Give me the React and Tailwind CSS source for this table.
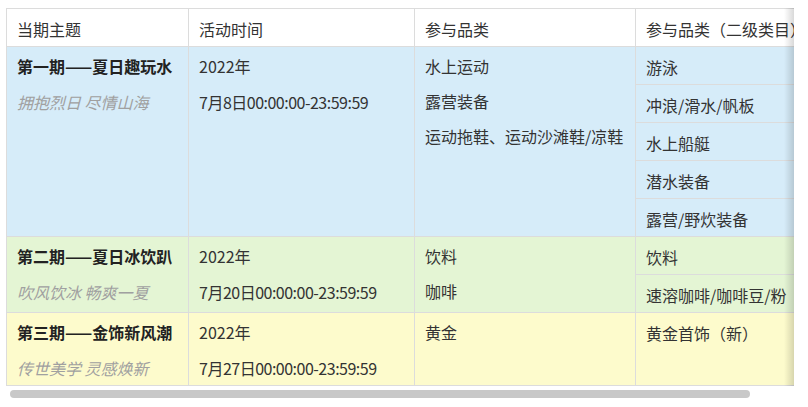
const rows = [
  {
    title: "第一期——夏日趣玩水",
    slogan: "拥抱烈日 尽情山海",
    date: "7月8日00:00:00-23:59:59",
    cats: ["水上运动", "露营装备", "运动拖鞋、运动沙滩鞋/凉鞋"],
    subs: ["游泳", "冲浪/滑水/帆板", "水上船艇", "潜水装备", "露营/野炊装备"],
    bg: "bg-[#d6ecf9]",
  },
  {
    title: "第二期——夏日冰饮趴",
    slogan: "吹风饮冰 畅爽一夏",
    date: "7月20日00:00:00-23:59:59",
    cats: ["饮料", "咖啡"],
    subs: ["饮料", "速溶咖啡/咖啡豆/粉"],
    bg: "bg-[#e4f5d4]",
  },
  {
    title: "第三期——金饰新风潮",
    slogan: "传世美学 灵感焕新",
    date: "7月27日00:00:00-23:59:59",
    cats: ["黄金"],
    subs: ["黄金首饰（新）"],
    bg: "bg-[#fdfbcc]",
  },
];

const font = { fontFamily: '"Noto Sans CJK SC", "Liberation Sans", sans-serif' };

export default function App() {
  return (
    <div className="min-h-screen bg-white pl-[6px] pr-[14px] pt-2 text-[16px] text-[#333]" style={font}>
      <div className="relative">
        <div className="overflow-hidden">
          <table className="w-[830px] table-fixed border-collapse border border-[#dcdcdc]">
            <colgroup>
              <col className="w-[182px]" />
              <col className="w-[226px]" />
              <col className="w-[221px]" />
              <col className="w-[201px]" />
            </colgroup>
            <thead>
              <tr className="bg-white">
                {["当期主题", "活动时间", "参与品类", "参与品类（二级类目）"].map((h) => (
                  <th
                    key={h}
                    className="h-[38px] whitespace-nowrap border border-[#dcdcdc] px-[10px] pt-[2px] text-left align-middle font-normal leading-[22px]"
                  >
                    {h}
                  </th>
                ))}
              </tr>
            </thead>
            <tbody>
              {rows.map((r) => (
                <tr key={r.title} className={r.bg}>
                  <td className="border border-[#dcdcdc] px-[10px] pt-2 pb-[6px] align-top">
                    <div className="flex flex-col gap-[14px] leading-[22px]">
                      <span className="whitespace-nowrap font-bold text-[#222]">{r.title}</span>
                      <span className="whitespace-nowrap italic text-[#a0a0a0]">{r.slogan}</span>
                    </div>
                  </td>
                  <td className="border border-[#dcdcdc] px-[10px] pt-2 pb-[6px] align-top">
                    <div className="flex flex-col gap-[14px] leading-[22px]">
                      <span>2022年</span>
                      <span className="whitespace-nowrap tracking-[-0.5px]">{r.date}</span>
                    </div>
                  </td>
                  <td className="border border-[#dcdcdc] px-[10px] pt-2 pb-[6px] align-top">
                    <div className="flex flex-col gap-[13px] leading-[22px]">
                      {r.cats.map((c) => (
                        <span key={c} className="whitespace-nowrap">{c}</span>
                      ))}
                    </div>
                  </td>
                  <td className="border border-[#dcdcdc] p-0 align-top">
                    <div className="flex flex-col">
                      {r.subs.map((s, i) => (
                        <div
                          key={s}
                          className={
                            "flex items-center whitespace-nowrap px-[10px] pt-[3px] leading-[22px]" +
                            (i < r.subs.length - 1 ? " h-[38px] border-b border-[#dcdcdc]" : " h-[37px]")
                          }
                        >
                          {s}
                        </div>
                      ))}
                    </div>
                  </td>
                </tr>
              ))}
            </tbody>
          </table>
        </div>
        <div className="pointer-events-none absolute right-0 top-0 bottom-4 w-[10px] bg-gradient-to-l from-black/15 to-transparent" />
        <div className="h-4 p-1">
          <div className="h-2 w-[740px] rounded-full bg-[#c8c8c8]" />
        </div>
      </div>
    </div>
  );
}
